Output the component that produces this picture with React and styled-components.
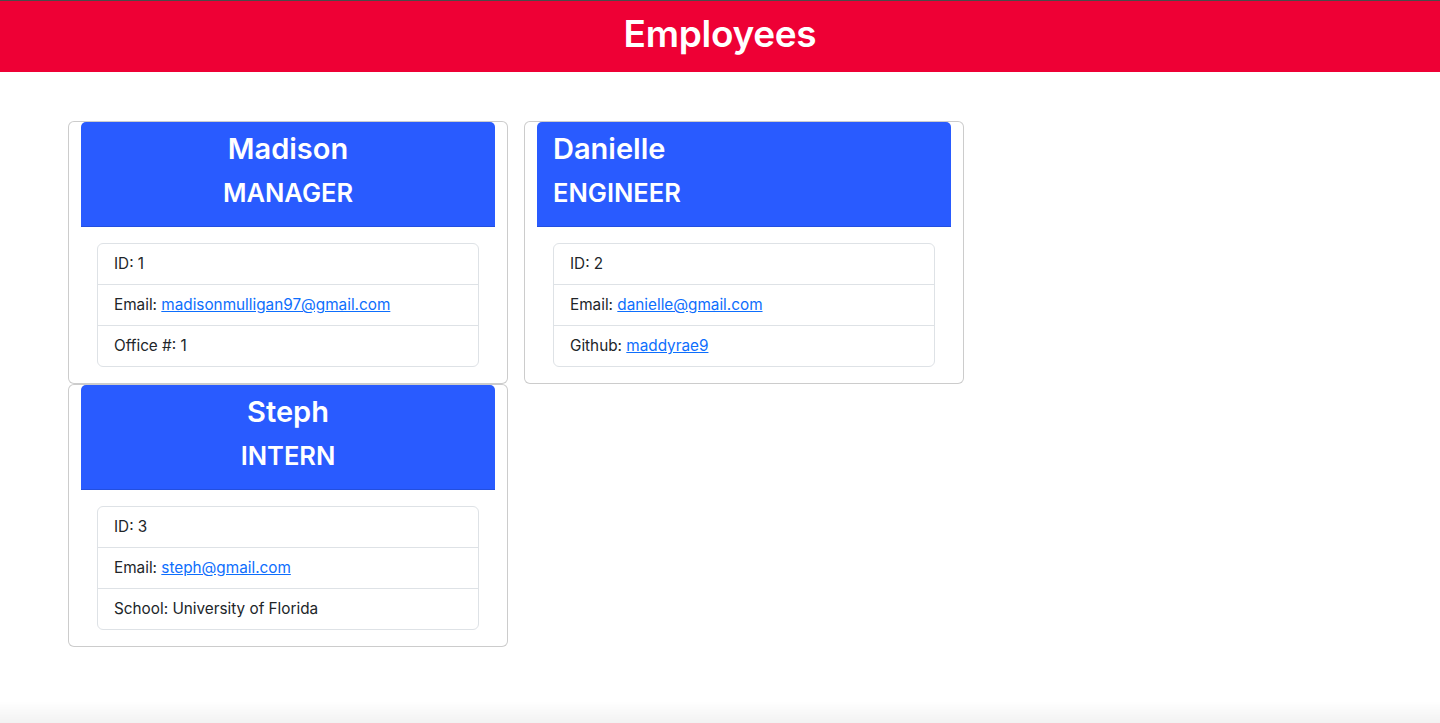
import React from "react";
import styled, { createGlobalStyle } from "styled-components";

const GlobalStyle = createGlobalStyle`
  * {
    box-sizing: border-box;
  }
  body {
    margin: 0;
    font-family: Inter, "Noto Sans", "Liberation Sans", sans-serif;
    font-size: 16px;
    line-height: 1.5;
    color: #212529;
    background: #fff;
  }
`;

const Header = styled.header`
  height: 72px;
  padding-bottom: 5px;
  background: #ee0035;
  border-top: 1px solid #4a4a4a;
  display: flex;
  align-items: center;
  justify-content: center;
  h1 {
    margin: 0;
    color: #fff;
    font-size: 37px;
    font-weight: 600;
    line-height: 1.2;
    letter-spacing: -0.3px;
  }
`;

const Board = styled.main`
  display: grid;
  grid-template-columns: 440px 440px;
  column-gap: 16px;
  align-items: start;
  padding: 49px 0 0 68px;
`;

const Column = styled.div`
  display: flex;
  flex-direction: column;
`;

const Card = styled.div`
  border: 1px solid rgba(0, 0, 0, 0.2);
  border-radius: 6px;
  background: #fff;
`;

const CardHeader = styled.div`
  margin: 0 12px;
  padding: 8px 16px;
  background: #295bff;
  color: #fff;
  border-radius: 5px 5px 0 0;
  border-bottom: 1px solid rgba(0, 0, 0, 0.125);
  text-align: ${(props) => (props.$center ? "center" : "left")};
  h2 {
    margin: 0 0 8px;
    font-size: 29px;
    font-weight: 600;
    line-height: 38.4px;
  }
  h3 {
    margin: 0 0 8px;
    font-size: 25.5px;
    font-weight: 600;
    line-height: 33.6px;
  }
`;

const CardBody = styled.div`
  padding: 16px 28px;
`;

const List = styled.ul`
  list-style: none;
  margin: 0;
  padding: 0;
  border: 1px solid #dee2e6;
  border-radius: 6px;
`;

const Item = styled.li`
  padding: 8px 16px;
  font-size: 15.3px;
  line-height: 24px;
  & + & {
    border-top: 1px solid #dee2e6;
  }
  a {
    color: #0d6efd;
    text-decoration: underline;
  }
`;

const BottomShade = styled.div`
  position: fixed;
  left: 0;
  right: 0;
  bottom: 0;
  height: 22px;
  pointer-events: none;
  background: linear-gradient(to bottom, rgba(0, 0, 0, 0), rgba(0, 0, 0, 0.05));
`;

const EmployeeCard = ({ name, role, id, email, extraLabel, extra, link, center }) => (
  <Card>
    <CardHeader $center={center}>
      <h2>{name}</h2>
      <h3>{role}</h3>
    </CardHeader>
    <CardBody>
      <List>
        <Item>ID: {id}</Item>
        <Item>
          Email: <a href={`mailto:${email}`}>{email}</a>
        </Item>
        <Item>
          {extraLabel}: {link ? <a href="#">{extra}</a> : extra}
        </Item>
      </List>
    </CardBody>
  </Card>
);

const App = () => {
  return (
    <>
      <GlobalStyle />
      <Header>
        <h1>Employees</h1>
      </Header>
      <Board>
        <Column>
          <EmployeeCard
            center
            name="Madison"
            role="MANAGER"
            id={1}
            email="madisonmulligan97@gmail.com"
            extraLabel="Office #"
            extra="1"
          />
          <EmployeeCard
            center
            name="Steph"
            role="INTERN"
            id={3}
            email="steph@gmail.com"
            extraLabel="School"
            extra="University of Florida"
          />
        </Column>
        <Column>
          <EmployeeCard
            name="Danielle"
            role="ENGINEER"
            id={2}
            email="danielle@gmail.com"
            extraLabel="Github"
            extra="maddyrae9"
            link
          />
        </Column>
      </Board>
      <BottomShade />
    </>
  );
};

export default App;
